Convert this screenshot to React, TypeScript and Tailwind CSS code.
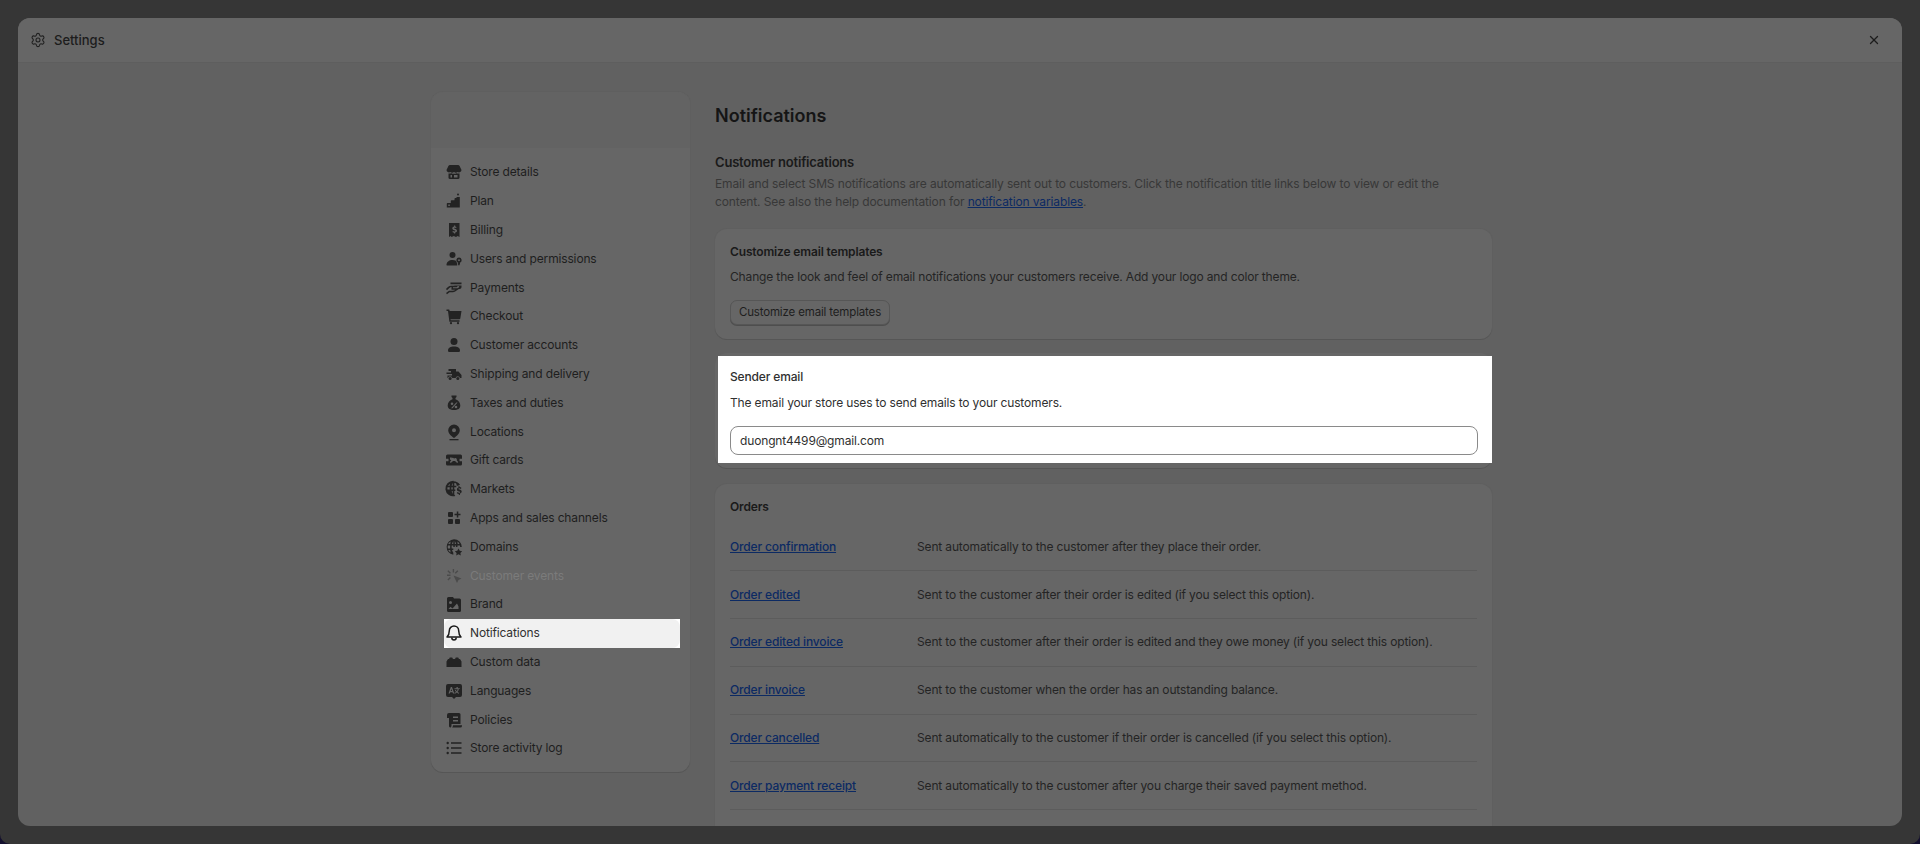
import React from "react";
import { Settings, X } from "lucide-react";

const P = ({ children }: { children: React.ReactNode }) => (
  <svg viewBox="0 0 20 20" className="w-5 h-5 shrink-0 text-[#232323] fill-current">{children}</svg>
);

const icons: Record<string, React.ReactNode> = {
  store: <P><path d="M6 3h8c.7 0 1.300.4 1.600 1l1.900 4a2.500 2.500 0 0 1-3.800 2 3.300 3.300 0 0 1-3.700 0 3.300 3.300 0 0 1-3.700 0 2.500 2.500 0 0 1-3.800-2l1.900-4C4.700 3.400 5.300 3 6 3z" /><path fillRule="evenodd" d="M4.500 11.500c1 .2 2 .1 2.800-.3 1.700.8 3.700.8 5.400 0 .8.4 1.800.5 2.800.3v4.300c0 .7-.5 1.200-1.200 1.200H5.700c-.7 0-1.200-.5-1.200-1.200zM6.500 13v2.500H8V13zm3.500 0v2.500h3.500V13z" /></P>,
  plan: <P><circle cx="14" cy="3.600" r="1" /><path fillRule="evenodd" d="M12.500 6h3.300v10.500H2.800V13c0-.6.400-1 1-1h3v-1.800c0-.6.400-1 1-1h2.700V8c0-.6.400-1 1-1h1zM4.300 13.500v1.500h1.500v-1.500z" /></P>,
  billing: <P><path fillRule="evenodd" d="M5 3h10.500v14l-1.800-1-1.700 1-2.200-1-2.200 1-1-1-1.600 1zm5.100 2.500v1a2 2 0 0 0-1.800 1.800c0 1.200.8 1.700 2 2 .8.200 1.100.4 1.100.7 0 .6-1.500.6-2.500 0l-.5 1.100c.5.300 1 .5 1.700.6v.9h1.100v-1c1.100-.2 1.800-.9 1.800-1.800 0-1.300-1-1.800-2.100-2.100-.8-.2-1-.3-1-.6 0-.6 1.300-.5 2.200-.1l.4-1.100a4 4 0 0 0-1.300-.4v-1z" /></P>,
  users: <P><circle cx="8.500" cy="6" r="3" /><path d="M2.500 16c0-3 2.500-5 6-5 1.300 0 2.500.3 3.400.8.200 1 .7 1.800 1.300 2.400v2.300H3.500a1 1 0 0 1-1-.5z" /><path fillRule="evenodd" d="M15 8.500a2.700 2.700 0 0 1 1 5.200v1.300l-1 1.800-1-1.200v-1.900a2.700 2.700 0 0 1 1-5.200zm0 1.800a.9.900 0 1 0 0 1.800.9.900 0 0 0 0-1.800z" /></P>,
  payments: <P><path d="M6.500 4.500h11v1.800h-11zM9.500 7.500h8v1.500c-.1 1.500-1 2-2.500 2h-2l2-1.500c.6-.6 0-1.800-1-1.300zM2 11c1.500-2 3-3.300 5-3.300h5.500c1 0 1 1.400 0 1.500H9v1h4.500l2-1.200v1.500l-4 2.800c-1 .7-2 1-3.500 1H5.500l-2.500 2-1-1.200 3-2.400h3.500c1.200 0 2-.3 3-.9H7.500V8.900c-1.700.2-2.500 1.200-4.500 3.400z" /></P>,
  checkout: <P><path d="M2.500 3.500h2.700l.5 1.500h11.800l-1.200 7.500a1 1 0 0 1-1 .8H6.500l.2 1h8.800v1.500H5.400L4 5H2.500z" /><circle cx="7" cy="17.200" r="1.100" /><circle cx="14" cy="17.200" r="1.100" /></P>,
  customer: <P><circle cx="10" cy="6.500" r="3.500" /><path d="M4 15.500c0-2.700 2.500-4 6-4s6 1.300 6 4c0 1-.7 1.500-1.500 1.500h-9c-.8 0-1.500-.5-1.500-1.500z" /></P>,
  truck: <P><path d="M4.500 5h7.500v2.500h2.500l3 3.500v3h-1.500a2.300 2.300 0 0 0-4.400 0H8.300a2.300 2.300 0 0 0-4.400 0H3.500v-2.500H8V10H2.500V8.500H7V7H4.500z" /><circle cx="6.100" cy="14.500" r="1.500" /><circle cx="13.800" cy="14.500" r="1.500" /></P>,
  taxes: <P><path fillRule="evenodd" d="M7.500 2.500h5v1.500l-1 1v1.200c3 1 4.800 3.300 4.800 6.300 0 3-2.300 4.500-6.300 4.500s-6.300-1.500-6.300-4.500c0-3 1.800-5.300 4.800-6.300V5l-1-1zM8 9.500a1.300 1.300 0 1 0 0 2.600 1.300 1.300 0 0 0 0-2.600zm4 3.200a1.300 1.300 0 1 0 0 2.600 1.300 1.300 0 0 0 0-2.600zm.3-3.200L7 15.200h1.600l5-5.700z" /></P>,
  locations: <P><path fillRule="evenodd" d="M10 2.500a5.800 5.800 0 0 1 5.800 5.800c0 3-2.800 5.800-5.800 7.700-3-1.900-5.800-4.700-5.800-7.700A5.800 5.800 0 0 1 10 2.500zm0 3.800a2 2 0 1 0 0 4 2 2 0 0 0 0-4z" /><path d="M5.500 17h9v1.300h-9z" /></P>,
  gift: <P><path fillRule="evenodd" d="M3.500 4.500h13A1.500 1.500 0 0 1 18 6v2.800h-2.500v2.400H18V14a1.500 1.500 0 0 1-1.500 1.500h-13A1.500 1.500 0 0 1 2 14v-2.800h2.500V8.800H2V6a1.500 1.500 0 0 1 1.500-1.500zM7.500 7.200a1.500 1.500 0 0 0-.2 3L5.800 12l1 1L9 11l-.1-.1h2.200l-.1.100 2.200 2 1-1-1.500-1.800a1.500 1.500 0 1 0-2.700-1.400 1.500 1.500 0 0 0-2.500-.6z" /></P>,
  markets: <P><path fillRule="evenodd" d="M9.500 2.200a7.800 7.800 0 0 1 6.500 3.600l-2 .9h-1.200a10 10 0 0 0-.8-2.500 6 6 0 0 0-1.700-.3v2.800h2v1.500h-2v2.300h1v1.500h-1v3.500l1 1.500a7.800 7.800 0 1 1-1.800-15.300zM8.700 4a6 6 0 0 0-1 2.800h1zm0 4.300H7.400a13 13 0 0 0 0 2.300h1.300zm0 3.800h-1c.2 1 .5 2 1 2.900zM6.200 4.700a6 6 0 0 0-2.200 2.100h1.600c.1-.7.300-1.400.6-2.100zM3.500 8.300a6 6 0 0 0 0 2.300h2.200a14 14 0 0 1 0-2.300z" /><path d="M15.500 7v1.100c1 .1 1.700.5 2 1l-.9.800c-.3-.3-.8-.6-1.300-.6-.6 0-.9.200-.9.500 0 .4.400.5 1.100.7 1.200.3 2.200.8 2.200 2.100 0 1-.7 1.700-1.800 1.900v1.500h-1.100V15c-.9-.1-1.600-.5-2.100-1.100l.9-.8c.4.400.9.700 1.600.7.600 0 1-.2 1-.6 0-.4-.4-.5-1.100-.7-1.200-.3-2.200-.8-2.200-2.100 0-1 .6-1.700 1.600-1.900V7z" /></P>,
  apps: <P><rect x="4" y="4" width="5" height="5" rx="1" /><rect x="4" y="11" width="5" height="5" rx="1" /><rect x="11" y="11" width="5" height="5" rx="1" /><path d="M12.800 3.500h1.500v2.200h2.200v1.500h-2.200v2.300h-1.500V7.200h-2.300V5.700h2.300z" /></P>,
  domains: <P><path fillRule="evenodd" d="M10 2.200a7.800 7.800 0 0 1 7.800 7.800h-1.700c0-.5 0-1-.2-1.500h-2.500l.1 1.500h-1.600c0-.5 0-1-.1-1.500h-1V10H9.300V8.500H7.700a13 13 0 0 0 0 3h1.600v1.500H8c.2.900.6 1.800 1.300 2.800v1.900A7.800 7.800 0 0 1 10 2.200zm-.7 1.900A7 7 0 0 0 8 7h1.300zm1.500 0V7h1.300a7 7 0 0 0-1.300-2.900zM6.700 4.500a6 6 0 0 0-2.500 2.500h2.100c.1-.9.200-1.700.4-2.500zm6.600 0c.2.800.4 1.600.4 2.500h1.900a6 6 0 0 0-2.300-2.500zM3.900 8.500a6 6 0 0 0 0 3h2.300a14 14 0 0 1 0-3zM4.200 13a6 6 0 0 0 2.500 2.500c-.2-.8-.4-1.600-.5-2.500z" /><path d="M14.500 11.500l1.200 2.300 2.500.4-1.800 1.800.4 2.500-2.300-1.200-2.300 1.200.4-2.500-1.800-1.800 2.500-.4z" /></P>,
  events: <P><g className="opacity-40"><path d="M9.500 9.500l8 3-3 1.500-1.500 3zM8.700 3h1.400v3.500H8.700zM3 8.500h3.500v1.400H3zM4.400 4.200l2.500 2.500-1 1-2.500-2.500zM13.300 4.200l1 1-2.500 2.500-1-1zM5.900 11l1 1-2.500 2.500-1-1z" /></g></P>,
  brand: <P><path fillRule="evenodd" d="M4.500 3H9l1 1.500h5.500A1.500 1.500 0 0 1 17 6v10.500A1.500 1.500 0 0 1 15.500 18h-11A1.500 1.500 0 0 1 3 16.500v-12A1.500 1.500 0 0 1 4.500 3zm2 4a1.500 1.500 0 1 0 0 3 1.500 1.500 0 0 0 0-3zm6.500 2.500-4.500 5-2-1.800-2 2.300h10v-2.500z" /></P>,
  bell: <svg viewBox="0 0 20 20" className="w-5 h-5 shrink-0 text-[#1a1a1a]" fill="none" stroke="currentColor" strokeWidth="1.500" strokeLinejoin="round"><path d="M10 3a4.700 4.700 0 0 0-4.700 4.700c0 3.300-.8 4.800-2.300 6.300h14c-1.500-1.500-2.300-3-2.300-6.300A4.700 4.700 0 0 0 10 3z" /><path d="M7.800 14.500c0 1.500 1 2.500 2.200 2.500s2.200-1 2.200-2.500" /></svg>,
  custom: <P><path d="M2.500 9.500 4 7h1l.8-1.500h2.400L9 7h2l.8-1.500h2.400L15 7h1l1.500 2.500V15h-15z" /></P>,
  languages: <P><path fillRule="evenodd" d="M4 3h12a2 2 0 0 1 2 2v9a2 2 0 0 1-2 2h-4l-2 2-2-2H4a2 2 0 0 1-2-2V5a2 2 0 0 1 2-2zm2.800 3L4.500 12.500h1.300l.5-1.300h2.200l.5 1.300h1.300L8 6zm.6 1.900.7 2.200H6.700zm5.100-2v1.300h-2v1h3.300c-.2.800-.5 1.400-1 2-.4-.4-.7-.8-.9-1.300h-1.100c.3.800.7 1.500 1.200 2-.5.400-1 .7-1.700.8l.5 1c.8-.2 1.500-.6 2-1.100.6.500 1.300.9 2 1.100l.5-1c-.7-.1-1.300-.4-1.800-.8.700-.8 1.100-1.800 1.300-3h1V7.200h-2V5.900z" /></P>,
  policies: <P><path fillRule="evenodd" d="M5 3h10a1.500 1.500 0 0 1 1.500 1.500V14h-9v1.500c0 1-.5 1.700-1 2h-.3a1.500 1.500 0 0 1-1.200-1.500V8H3V5a2 2 0 0 1 2-2zm4 3.500V8h5V6.500zm0 3.500v1.500h5V10z" /><path d="M9 15.300h9v.7a1.700 1.700 0 0 1-1.700 1.600H8.200c.5-.5.800-1.300.8-2.300z" /></P>,
  log: <P><circle cx="3.700" cy="5" r="1.200" /><circle cx="3.700" cy="10" r="1.200" /><circle cx="3.700" cy="15" r="1.200" /><path d="M7 4.200h10.500v1.500H7zM7 9.200h10.500v1.500H7zM7 14.200h10.500v1.500H7z" /></P>,
};

const nav: [string, string][] = [
  ["store", "Store details"], ["plan", "Plan"], ["billing", "Billing"], ["users", "Users and permissions"],
  ["payments", "Payments"], ["checkout", "Checkout"], ["customer", "Customer accounts"], ["truck", "Shipping and delivery"],
  ["taxes", "Taxes and duties"], ["locations", "Locations"], ["gift", "Gift cards"], ["markets", "Markets"],
  ["apps", "Apps and sales channels"], ["domains", "Domains"], ["events", "Customer events"], ["brand", "Brand"],
  ["bell", "Notifications"], ["custom", "Custom data"], ["languages", "Languages"], ["policies", "Policies"], ["log", "Store activity log"],
];

const orders: [string, string][] = [
  ["Order confirmation", "Sent automatically to the customer after they place their order."],
  ["Order edited", "Sent to the customer after their order is edited (if you select this option)."],
  ["Order edited invoice", "Sent to the customer after their order is edited and they owe money (if you select this option)."],
  ["Order invoice", "Sent to the customer when the order has an outstanding balance."],
  ["Order cancelled", "Sent automatically to the customer if their order is cancelled (if you select this option)."],
  ["Order payment receipt", "Sent automatically to the customer after you charge their saved payment method."],
];

export default function App() {
  return (
    <div className="h-[844px] w-[1920px] overflow-hidden bg-[#14102e]">
      <div className="h-full rounded-b-[10px] bg-[#363636] p-[18px] font-['Inter','Liberation_Sans',sans-serif] text-[12px] tracking-[-0.15px] text-[#1c1c1c]">
        <div className="flex h-[808px] flex-col overflow-hidden rounded-[12px] bg-[#616161]">
          <header className="flex h-[45px] shrink-0 items-center justify-between border-b border-[#5e5e5e] bg-[#666666] pl-[12px] pr-[21px]">
            <div className="flex items-center gap-[8px]">
              <Settings size={16} strokeWidth={1.6} className="text-[#202020]" />
              <span className="text-[13px] font-medium leading-none tracking-[0px] text-[#1c1c1c]">Settings</span>
            </div>
            <X size={14} strokeWidth={2.2} className="text-[#1c1c1c]" />
          </header>

          <div className="flex min-h-0 flex-1 items-start gap-[25px] overflow-hidden pl-[413px] pt-[29px]">
            <aside className="w-[259px] shrink-0 overflow-hidden rounded-[12px] bg-[#666666] shadow-[0_1px_0_#565656,0_0_0_1px_#5f5f5f]">
              <div className="h-[56px] bg-[#636363]" />
              <nav className="pb-[9px] pl-[13px] pr-[10px] pt-[10px]">
                {nav.map(([icon, label]) => {
                  const active = label === "Notifications";
                  const muted = label === "Customer events";
                  return (
                    <div key={label} className={`h-[28.8px] ${active ? "bg-white" : ""}`}>
                      <div className={`flex h-full items-center gap-[6px] rounded-[8px] ${active ? "bg-[#f1f1f1]" : ""}`}>
                        {icons[icon]}
                        <span className={`leading-none ${muted ? "text-[#7b7b7b]" : active ? "text-[#303030]" : "text-[#1e1e1e]"}`}>{label}</span>
                      </div>
                    </div>
                  );
                })}
              </nav>
            </aside>

            <main className="w-[777px] shrink-0">
              <h1 className="mt-[11px] text-[18px] font-semibold leading-[26px] tracking-[0px] text-[#151515]">Notifications</h1>
              <h2 className="mt-[24px] text-[13px] font-semibold leading-[18px] tracking-[-0.2px] text-[#1a1a1a]">Customer notifications</h2>
              <p className="mt-[4px] w-[760px] leading-[18px] tracking-[-0.12px] text-[#383838]">
                Email and select SMS notifications are automatically sent out to customers. Click the notification title links below to view or edit the content. See also the help documentation for{" "}
                <a className="text-[#0c2a63] underline">notification variables</a>.
              </p>

              <section className="mt-[18px] h-[110px] rounded-[12px] bg-[#666666] px-[15px] pt-[14px] shadow-[0_1px_0_#565656,0_0_0_1px_#5f5f5f]">
                <h3 className="font-semibold leading-[18px] text-[#1a1a1a]">Customize email templates</h3>
                <p className="mt-[7px] leading-[18px] text-[#242424]">Change the look and feel of email notifications your customers receive. Add your logo and color theme.</p>
                <button className="mt-[14px] h-[25px] w-[160px] rounded-[7px] border border-[#565656] bg-[#666666] text-[11.5px] font-normal leading-none text-[#1e1e1e] shadow-[0_1px_0_#4e4e4e]">Customize email templates</button>
              </section>

              <section className="mt-[14px] h-[115px] rounded-[12px] bg-[#666666] pb-[5px] pl-[3px] pt-[3px] shadow-[0_1px_0_#565656]">
                <div className="h-[107px] bg-white pl-[12px] pr-[14px] pt-[12px]">
                  <h3 className="font-medium leading-[18px] text-[#303030]">Sender email</h3>
                  <p className="mt-[8px] leading-[18px] text-[#303030]">The email your store uses to send emails to your customers.</p>
                  <input readOnly value="duongnt4499@gmail.com" className="mt-[14px] h-[29px] w-full rounded-[8px] border border-[#8a8a8a] bg-white px-[9px] text-[12px] text-[#303030] outline-none" />
                </div>
              </section>

              <section className="mt-[16px] rounded-[12px] bg-[#666666] px-[15px] pb-[100px] pt-[14px] shadow-[0_0_0_1px_#5f5f5f]">
                <h3 className="font-semibold leading-[18px] text-[#1a1a1a]">Orders</h3>
                <div className="mt-[7.5px]">
                  {orders.map(([title, desc]) => (
                    <div key={title} className="flex h-[47.8px] items-center border-b border-[#5c5c5c]">
                      <a className="w-[187px] shrink-0 font-medium text-[#0c2a63] underline">{title}</a>
                      <span className="text-[#242424]">{desc}</span>
                    </div>
                  ))}
                </div>
              </section>
            </main>
          </div>
        </div>
      </div>
    </div>
  );
}
